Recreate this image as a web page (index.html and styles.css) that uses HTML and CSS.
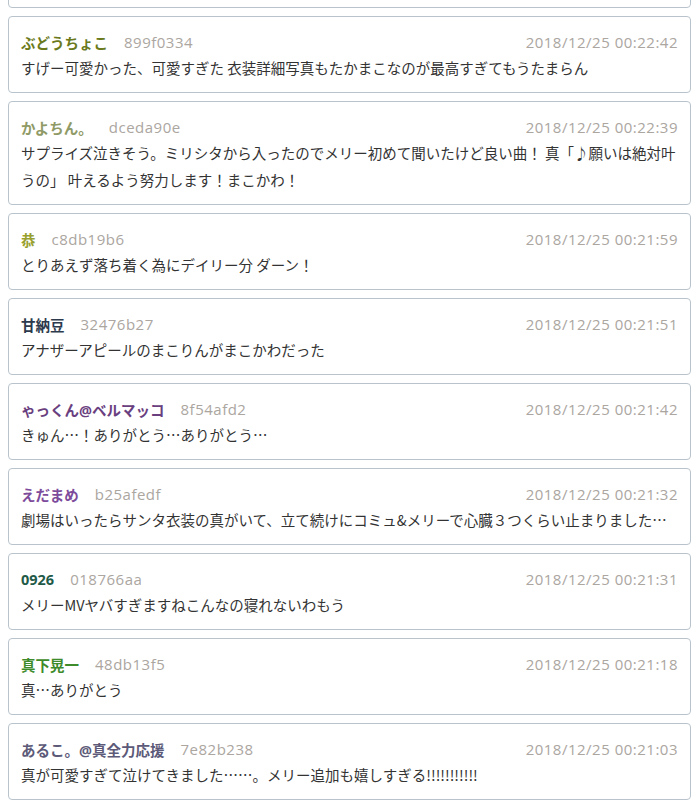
FILE: index.html
```html
<!DOCTYPE html>
<html lang="ja">
<head>
  <meta charset="UTF-8">
  <title>コメント</title>
  <link rel="stylesheet" href="styles.css">
</head>
<body>

  <div class="comment-list">

    <!-- previous comment, scrolled out of view -->
    <div class="comment comment-prev"></div>

    <div class="comment">
      <div class="comment-head">
        <span class="comment-name c-olive">ぶどうちょこ</span>
        <span class="comment-id">899f0334</span>
        <span class="comment-date">2018/12/25 00:22:42</span>
      </div>
      <div class="comment-body">すげー可愛かった、可愛すぎた 衣装詳細写真もたかまこなのが最高すぎてもうたまらん</div>
    </div>

    <div class="comment">
      <div class="comment-head">
        <span class="comment-name c-khaki">かよちん。</span>
        <span class="comment-id">dceda90e</span>
        <span class="comment-date">2018/12/25 00:22:39</span>
      </div>
      <div class="comment-body">サプライズ泣きそう。ミリシタから入ったのでメリー初めて聞いたけど良い曲！ 真「♪願いは絶対叶<br>うの」 叶えるよう努力します！まこかわ！</div>
    </div>

    <div class="comment">
      <div class="comment-head">
        <span class="comment-name c-lime">恭</span>
        <span class="comment-id">c8db19b6</span>
        <span class="comment-date">2018/12/25 00:21:59</span>
      </div>
      <div class="comment-body">とりあえず落ち着く為にデイリー分 ダーン！</div>
    </div>

    <div class="comment">
      <div class="comment-head">
        <span class="comment-name c-navy">甘納豆</span>
        <span class="comment-id">32476b27</span>
        <span class="comment-date">2018/12/25 00:21:51</span>
      </div>
      <div class="comment-body">アナザーアピールのまこりんがまこかわだった</div>
    </div>

    <div class="comment">
      <div class="comment-head">
        <span class="comment-name c-plum">ゃっくん@ベルマッコ</span>
        <span class="comment-id">8f54afd2</span>
        <span class="comment-date">2018/12/25 00:21:42</span>
      </div>
      <div class="comment-body">きゅん…！ありがとう…ありがとう…</div>
    </div>

    <div class="comment">
      <div class="comment-head">
        <span class="comment-name c-violet">えだまめ</span>
        <span class="comment-id">b25afedf</span>
        <span class="comment-date">2018/12/25 00:21:32</span>
      </div>
      <div class="comment-body one-line">劇場はいったらサンタ衣装の真がいて、立て続けにコミュ&amp;メリーで心臓３つくらい止まりました…</div>
    </div>

    <div class="comment">
      <div class="comment-head">
        <span class="comment-name c-teal">0926</span>
        <span class="comment-id">018766aa</span>
        <span class="comment-date">2018/12/25 00:21:31</span>
      </div>
      <div class="comment-body">メリーMVヤバすぎますねこんなの寝れないわもう</div>
    </div>

    <div class="comment">
      <div class="comment-head">
        <span class="comment-name c-green">真下晃一</span>
        <span class="comment-id">48db13f5</span>
        <span class="comment-date">2018/12/25 00:21:18</span>
      </div>
      <div class="comment-body">真…ありがとう</div>
    </div>

    <div class="comment">
      <div class="comment-head">
        <span class="comment-name c-slate">あるこ。@真全力応援</span>
        <span class="comment-id">7e82b238</span>
        <span class="comment-date">2018/12/25 00:21:03</span>
      </div>
      <div class="comment-body">真が可愛すぎて泣けてきました……。メリー追加も嬉しすぎる!!!!!!!!!!!</div>
    </div>

  </div>

</body>
</html>
```

FILE: styles.css
```css
body {
  margin: 0 7px 0 8px;
  background: #fff;
  color: #333;
  font-family: 'Open Sans', 'Noto Sans CJK JP', sans-serif;
  font-size: 14.5px;
  overflow: hidden;
}

.comment-list {
  display: flex;
  flex-direction: column;
  gap: 8px;
  margin-top: -69px;
}

.comment {
  background: #fff;
  border: 1px solid #b9c3cb;
  border-radius: 4px;
  padding: 13px 12px 11px 12px;
}

.comment-prev {
  height: 51px;
}

.comment-head {
  display: flex;
  align-items: center;
  height: 24px;
}

.comment-name {
  font-weight: bold;
}

.comment-id {
  margin-left: 16px;
  color: #aba69f;
  font-size: 15px;
  letter-spacing: 0.5px;
}

.comment-date {
  margin-left: auto;
  color: #aba69f;
  font-size: 15px;
  letter-spacing: 0.5px;
}

.comment-body {
  font-family: 'Noto Sans CJK JP', 'Open Sans', sans-serif;
  line-height: 27px;
  color: #333;
}

.one-line {
  white-space: nowrap;
  overflow: hidden;
  text-overflow: ellipsis;
}

.c-olive { color: #6b7a1c; }
.c-khaki { color: #8f9a66; }
.c-lime { color: #98a02e; }
.c-navy { color: #2d3a4d; }
.c-plum { color: #6a3f80; }
.c-violet { color: #7d4b9b; }
.c-teal { color: #1f5a48; }
.c-green { color: #3d8b2a; }
.c-slate { color: #5c5a78; }
```
